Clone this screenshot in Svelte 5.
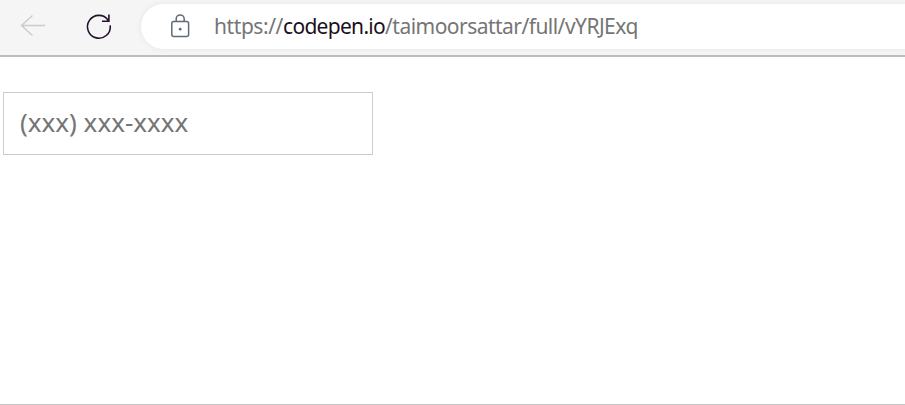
<script>
  const url = { scheme: 'https://', host: 'codepen.io', path: '/taimoorsattar/full/vYRJExq' };
  let phone = $state('');
</script>

<div class="window">
  <header class="toolbar">
    <button class="back" aria-label="Back">
      <svg width="26" height="24" viewBox="0 0 26 24" fill="none" stroke="#cacdc8" stroke-width="1.4">
        <path d="M25 11.5H1.5M12.5 1.5L1.5 11.5L12.5 21.5" />
      </svg>
    </button>
    <button class="reload" aria-label="Reload">
      <svg width="28" height="28" viewBox="0 0 28 28" fill="none" stroke="#24112a" stroke-width="1.6">
        <path d="M25.2 12.3A11.4 11.4 0 1 1 23.2 7.2M23.9 1.6V8.3H17" />
      </svg>
    </button>
    <div class="address">
      <svg class="lock" width="20" height="26" viewBox="0 0 20 26" fill="none" stroke="#606b78" stroke-width="1.5">
        <rect x="1.8" y="8.6" width="16.8" height="15" rx="2" />
        <path d="M6.2 8.6V5.9a4 4 0 0 1 8 0V8.6" />
        <circle cx="10.2" cy="16.2" r="1.4" fill="#606b78" stroke="none" />
      </svg>
      <div class="url"><span class="scheme">{url.scheme}</span><span class="host">{url.host}</span><span class="path">{url.path}</span></div>
    </div>
  </header>
  <main>
    <input type="tel" placeholder="(xxx) xxx-xxxx" bind:value={phone} />
  </main>
</div>

<style>
  .window {
    display: flex;
    flex-direction: column;
    box-sizing: border-box;
    height: 405px;
    overflow: hidden;
    background: #fff;
    border-bottom: 1px solid #c4c4c4;
    font-family: "Noto Sans", "Open Sans", sans-serif;
  }
  .toolbar {
    display: flex;
    align-items: flex-start;
    box-sizing: border-box;
    height: 57px;
    flex: none;
    overflow: hidden;
    background: #f5f5f5;
    border-bottom: 2px solid #bcbcbc;
  }
  button {
    display: flex;
    padding: 0;
    border: 0;
    background: none;
  }
  .back { margin: 14px 0 0 20px; }
  .reload { margin: 13px 0 0 39px; }
  .address {
    display: flex;
    align-items: center;
    flex: 1;
    box-sizing: border-box;
    height: 45px;
    margin: 4px 0 0 28px;
    padding-left: 29px;
    border-radius: 23px 0 0 23px;
    background: #fff;
    box-shadow: 0 0 6px rgba(0, 0, 0, 0.07);
  }
  .lock { flex: none; margin-top: -2px; }
  .url {
    margin: -2px 0 0 24px;
    font-size: 21px;
    line-height: 28px;
    white-space: nowrap;
    color: #757575;
  }
  .scheme { letter-spacing: -0.42px; }
  .host { color: #1b1020; letter-spacing: -0.7px; }
  .path { letter-spacing: -0.53px; }
  main { padding: 35px 3px; }
  input {
    display: block;
    box-sizing: border-box;
    width: 370px;
    height: 63px;
    padding: 0 15px 4px 16px;
    border: 1px solid #ccc;
    border-radius: 0;
    outline: none;
    background: #fff;
    color: #333;
    font: 26px "Noto Sans", "Open Sans", sans-serif;
  }
  input::placeholder { color: #757575; opacity: 1; }
</style>
